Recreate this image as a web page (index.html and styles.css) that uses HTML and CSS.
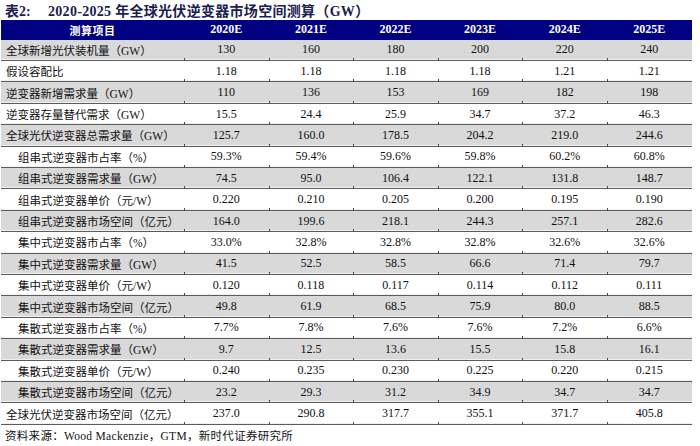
FILE: index.html
```html
<!DOCTYPE html>
<html lang="zh-CN">
<head>
<meta charset="utf-8">
<title>表2</title>
<link rel="stylesheet" href="styles.css">
</head>
<body>
<div class="page">
  <div class="title"><span class="tno">表2:</span><span class="ttext">2020-2025 年全球光伏逆变器市场空间测算（GW）</span></div>
  <div class="tbl">
    <div class="row head"><div class="c lab">测算项目</div><div class="c">2020E</div><div class="c">2021E</div><div class="c">2022E</div><div class="c">2023E</div><div class="c">2024E</div><div class="c">2025E</div></div>
    <div class="row g"><div class="c lab">全球新增光伏装机量（GW）</div><div class="c">130</div><div class="c">160</div><div class="c">180</div><div class="c">200</div><div class="c">220</div><div class="c">240</div></div>
    <div class="row"><div class="c lab">假设容配比</div><div class="c">1.18</div><div class="c">1.18</div><div class="c">1.18</div><div class="c">1.18</div><div class="c">1.21</div><div class="c">1.21</div></div>
    <div class="row g"><div class="c lab">逆变器新增需求量（GW）</div><div class="c">110</div><div class="c">136</div><div class="c">153</div><div class="c">169</div><div class="c">182</div><div class="c">198</div></div>
    <div class="row"><div class="c lab">逆变器存量替代需求（GW）</div><div class="c">15.5</div><div class="c">24.4</div><div class="c">25.9</div><div class="c">34.7</div><div class="c">37.2</div><div class="c">46.3</div></div>
    <div class="row g"><div class="c lab">全球光伏逆变器总需求量（GW）</div><div class="c">125.7</div><div class="c">160.0</div><div class="c">178.5</div><div class="c">204.2</div><div class="c">219.0</div><div class="c">244.6</div></div>
    <div class="row"><div class="c lab ind">组串式逆变器市占率（%）</div><div class="c">59.3%</div><div class="c">59.4%</div><div class="c">59.6%</div><div class="c">59.8%</div><div class="c">60.2%</div><div class="c">60.8%</div></div>
    <div class="row g"><div class="c lab ind">组串式逆变器需求量（GW）</div><div class="c">74.5</div><div class="c">95.0</div><div class="c">106.4</div><div class="c">122.1</div><div class="c">131.8</div><div class="c">148.7</div></div>
    <div class="row"><div class="c lab ind">组串式逆变器单价（元/W）</div><div class="c">0.220</div><div class="c">0.210</div><div class="c">0.205</div><div class="c">0.200</div><div class="c">0.195</div><div class="c">0.190</div></div>
    <div class="row g"><div class="c lab ind">组串式逆变器市场空间（亿元）</div><div class="c">164.0</div><div class="c">199.6</div><div class="c">218.1</div><div class="c">244.3</div><div class="c">257.1</div><div class="c">282.6</div></div>
    <div class="row"><div class="c lab ind">集中式逆变器市占率（%）</div><div class="c">33.0%</div><div class="c">32.8%</div><div class="c">32.8%</div><div class="c">32.8%</div><div class="c">32.6%</div><div class="c">32.6%</div></div>
    <div class="row g"><div class="c lab ind">集中式逆变器需求量（GW）</div><div class="c">41.5</div><div class="c">52.5</div><div class="c">58.5</div><div class="c">66.6</div><div class="c">71.4</div><div class="c">79.7</div></div>
    <div class="row"><div class="c lab ind">集中式逆变器单价（元/W）</div><div class="c">0.120</div><div class="c">0.118</div><div class="c">0.117</div><div class="c">0.114</div><div class="c">0.112</div><div class="c">0.111</div></div>
    <div class="row g"><div class="c lab ind">集中式逆变器市场空间（亿元）</div><div class="c">49.8</div><div class="c">61.9</div><div class="c">68.5</div><div class="c">75.9</div><div class="c">80.0</div><div class="c">88.5</div></div>
    <div class="row"><div class="c lab ind">集散式逆变器市占率（%）</div><div class="c">7.7%</div><div class="c">7.8%</div><div class="c">7.6%</div><div class="c">7.6%</div><div class="c">7.2%</div><div class="c">6.6%</div></div>
    <div class="row g"><div class="c lab ind">集散式逆变器需求量（GW）</div><div class="c">9.7</div><div class="c">12.5</div><div class="c">13.6</div><div class="c">15.5</div><div class="c">15.8</div><div class="c">16.1</div></div>
    <div class="row"><div class="c lab ind">集散式逆变器单价（元/W）</div><div class="c">0.240</div><div class="c">0.235</div><div class="c">0.230</div><div class="c">0.225</div><div class="c">0.220</div><div class="c">0.215</div></div>
    <div class="row g"><div class="c lab ind">集散式逆变器市场空间（亿元）</div><div class="c">23.2</div><div class="c">29.3</div><div class="c">31.2</div><div class="c">34.9</div><div class="c">34.7</div><div class="c">34.7</div></div>
    <div class="row"><div class="c lab">全球光伏逆变器市场空间（亿元）</div><div class="c">237.0</div><div class="c">290.8</div><div class="c">317.7</div><div class="c">355.1</div><div class="c">371.7</div><div class="c">405.8</div></div>
  </div>
  <div class="src">资料来源：Wood Mackenzie，GTM，新时代证券研究所</div>
</div>
</body>
</html>
```

FILE: styles.css
```css
html, body {
  margin: 0;
  padding: 0;
  background: #ffffff;
}

.page {
  width: 700px;
  height: 446px;
  font-family: "Liberation Serif", "Noto Sans CJK SC", serif;
  color: #111111;
}

.title {
  display: flex;
  align-items: center;
  height: 20px;
  padding-left: 5px;
  font-weight: bold;
  font-size: 14px;
  color: #1a2150;
  white-space: nowrap;
}

.tno {
  width: 43px;
  flex: none;
}

.ttext {
  letter-spacing: 0.3px;
}

.tbl {
  margin-left: 1px;
  width: 690.6px;
}

.row {
  display: grid;
  grid-template-columns: 183px repeat(6, 84.6px);
  height: 21.4px;
  box-sizing: border-box;
  border-bottom: 1px solid #5c5c5c;
  box-shadow: inset 0 -1px 0 #f0f0f0;
  font-size: 12px;
}

.row.g {
  background: #d9d9d9;
}

.row.head {
  height: 19.7px;
  background: #000080;
  color: #ffffff;
  font-weight: bold;
  border-bottom: none;
  box-shadow: none;
}

.c {
  position: relative;
  display: flex;
  align-items: center;
  justify-content: center;
  white-space: nowrap;
}

.row:not(.head) .c + .c::before {
  content: "";
  position: absolute;
  left: 0;
  bottom: -1px;
  width: 1px;
  height: 3px;
  background: #4a4a4a;
}

.lab {
  justify-content: flex-start;
  padding-left: 5px;
  font-size: 11.5px;
}

.head .lab {
  justify-content: center;
  padding-left: 0;
  font-size: 11px;
  letter-spacing: 0.5px;
}

.lab.ind {
  padding-left: 17px;
}

.src {
  display: flex;
  align-items: center;
  height: 21px;
  padding-left: 5px;
  font-size: 11.5px;
  letter-spacing: 0.3px;
  color: #111111;
}
```
